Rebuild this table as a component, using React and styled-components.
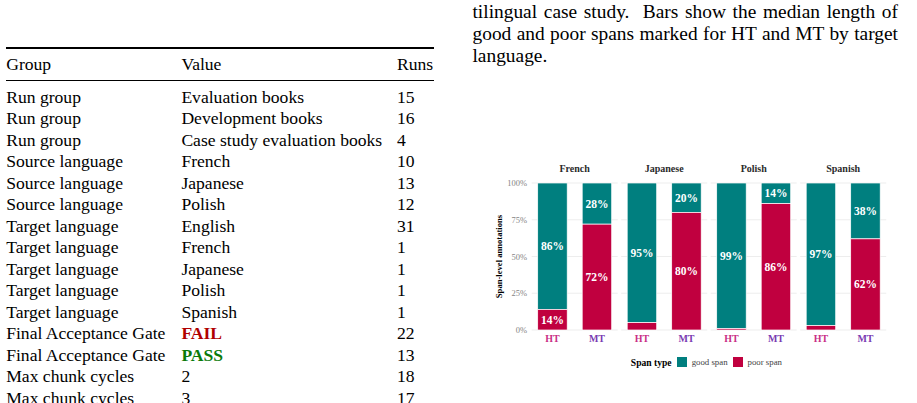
import React from 'react';
import styled, { createGlobalStyle } from 'styled-components';

const SERIF = '"Liberation Serif", "Times New Roman", serif';

const Global = createGlobalStyle`
  html, body { margin: 0; padding: 0; background: #fff; }
  body { font-family: ${SERIF}; color: #000; overflow: hidden; }
`;

const Page = styled.div`
  width: 917px;
  height: 403px;
  overflow: hidden;
  box-sizing: border-box;
  padding-left: 6.2px;
  display: flex;
  align-items: flex-start;
  gap: 38.3px;
`;

const LeftCol = styled.div`
  flex: none;
  width: 428px;
  padding-top: 46.5px;
`;

const Table = styled.table`
  width: 100%;
  table-layout: fixed;
  border-collapse: collapse;
  border-spacing: 0;
  font-family: ${SERIF};
  font-size: 17.6px;
  line-height: 21.5px;
  color: #000;
  border-top: 2px solid #000;
`;

const HeadRow = styled.tr`
  border-bottom: 1px solid #000;
`;

const Th = styled.th`
  font-weight: normal;
  text-align: left;
  padding: 5px 0 5px;
  white-space: nowrap;
  width: ${(p) => p.$w || 'auto'};
`;

const Td = styled.td`
  padding: ${(p) => (p.$first ? '5.5px 0 0' : '0')};
  white-space: nowrap;
  font-weight: ${(p) => (p.$tone ? 700 : 400)};
  color: ${(p) => (p.$tone === 'fail' ? '#b00000' : p.$tone === 'pass' ? '#0a7a0a' : '#000')};
`;

const RightCol = styled.div`
  flex: none;
  width: 425.5px;
`;

const Caption = styled.div`
  margin-top: -20.8px;
  font-size: 19.4px;
  line-height: 22px;
`;

const CapLine = styled.div`
  white-space: nowrap;
  text-align: ${(p) => (p.$last ? 'left' : 'justify')};
  text-align-last: ${(p) => (p.$last ? 'left' : 'justify')};
`;

const ChartSvg = styled.svg`
  display: block;
  margin-top: 87.8px;
  margin-left: 17.5px;
  font-family: ${SERIF};
`;

const StripLabel = styled.text`
  font-size: 10px;
  font-weight: 700;
  fill: #2b2b2b;
`;

const TickLabel = styled.text`
  font-size: 8.5px;
  fill: #858585;
`;

const AxisTitle = styled.text`
  font-size: 8.6px;
  font-weight: 700;
  fill: #000;
`;

const XLabel = styled.text`
  font-size: 10px;
  font-weight: 700;
  fill: ${(p) => (p.$kind === 'HT' ? '#c92f86' : '#7a3bb2')};
`;

const BarLabel = styled.text`
  font-size: 11.5px;
  font-weight: 700;
  fill: #fff;
`;

const Legend = styled.div`
  margin-top: 11.3px;
  margin-left: 59.2px;
  width: 354.5px;
  display: flex;
  justify-content: center;
  align-items: center;
  height: 12px;
  font-family: ${SERIF};
`;

const LegendTitle = styled.span`
  font-size: 9.6px;
  font-weight: 700;
  margin-right: 5px;
`;

const Key = styled.span`
  width: 10px;
  height: 10px;
  background: ${(p) => p.$color};
  margin-right: 5px;
`;

const KeyText = styled.span`
  font-size: 8.8px;
  color: #444;
  margin-right: 5px;
`;

const TEAL = '#007f7f';
const RED = '#c0003f';

const rows = [
  ['Run group', 'Evaluation books', '15'],
  ['Run group', 'Development books', '16'],
  ['Run group', 'Case study evaluation books', '4'],
  ['Source language', 'French', '10'],
  ['Source language', 'Japanese', '13'],
  ['Source language', 'Polish', '12'],
  ['Target language', 'English', '31'],
  ['Target language', 'French', '1'],
  ['Target language', 'Japanese', '1'],
  ['Target language', 'Polish', '1'],
  ['Target language', 'Spanish', '1'],
  ['Final Acceptance Gate', 'FAIL', '22', 'fail'],
  ['Final Acceptance Gate', 'PASS', '13', 'pass'],
  ['Max chunk cycles', '2', '18'],
  ['Max chunk cycles', '3', '17'],
];

const panels = [
  { name: 'French', HT: 14, MT: 72 },
  { name: 'Japanese', HT: 5, MT: 80 },
  { name: 'Polish', HT: 1, MT: 86 },
  { name: 'Spanish', HT: 3, MT: 62 },
];

const Y0 = 330;
const PH = 147;
const yv = (v) => Y0 - (v * PH) / 100;
const PX0 = 531.7;
const PSTEP = 89.5;
const PW = 86;
const BW = 29.5;
const ticks = [0, 25, 50, 75, 100];

function Bar({ x, poor, kind }) {
  const good = 100 - poor;
  const cx = x + BW / 2;
  return (
    <g>
      <rect x={x} y={yv(100)} width={BW} height={yv(poor) - yv(100)} fill={TEAL} stroke="#fff" strokeWidth="0.7" />
      <rect x={x} y={yv(poor)} width={BW} height={yv(0) - yv(poor)} fill={RED} stroke="#fff" strokeWidth="0.7" />
      {good >= 10 && (
        <BarLabel x={cx} y={yv(poor + good / 2)} textAnchor="middle" dominantBaseline="central">
          {good}%
        </BarLabel>
      )}
      {poor >= 10 && (
        <BarLabel x={cx} y={yv(poor / 2)} textAnchor="middle" dominantBaseline="central">
          {poor}%
        </BarLabel>
      )}
      <XLabel $kind={kind} x={cx} y={341.5} textAnchor="middle">
        {kind}
      </XLabel>
    </g>
  );
}

function Chart() {
  return (
    <ChartSvg width="420" height="190" viewBox="490 155 420 190">
      <AxisTitle x={0} y={0} transform="translate(498.5 256.5) rotate(-90)" textAnchor="middle" dominantBaseline="central">
        Span-level annotations
      </AxisTitle>
      {ticks.map((t) => (
        <TickLabel key={t} x={527} y={yv(t)} textAnchor="end" dominantBaseline="central">
          {t}%
        </TickLabel>
      ))}
      {panels.map((p, i) => {
        const x0 = PX0 + PSTEP * i;
        return (
          <g key={p.name}>
            {ticks.map((t) => (
              <line key={t} x1={x0} x2={x0 + PW} y1={yv(t)} y2={yv(t)} stroke="#ebebeb" strokeWidth="0.9" />
            ))}
            <StripLabel x={x0 + PW / 2} y={171.5} textAnchor="middle">
              {p.name}
            </StripLabel>
            <Bar x={x0 + 6} poor={p.HT} kind="HT" />
            <Bar x={x0 + 50.5} poor={p.MT} kind="MT" />
          </g>
        );
      })}
    </ChartSvg>
  );
}

export default function App() {
  return (
    <>
      <Global />
      <Page>
        <LeftCol>
          <Table>
            <thead>
              <HeadRow>
                <Th $w="175.2px">Group</Th>
                <Th $w="215.6px">Value</Th>
                <Th>Runs</Th>
              </HeadRow>
            </thead>
            <tbody>
              {rows.map(([g, v, n, tone], i) => (
                <tr key={i}>
                  <Td $first={i === 0}>{g}</Td>
                  <Td $first={i === 0} $tone={tone}>{v}</Td>
                  <Td $first={i === 0}>{n}</Td>
                </tr>
              ))}
            </tbody>
          </Table>
        </LeftCol>
        <RightCol>
          <Caption>
            <CapLine>Figure 4: Span-level quality annotations in the mul-</CapLine>
            <CapLine>tilingual case study.&nbsp; Bars show the median length of</CapLine>
            <CapLine>good and poor spans marked for HT and MT by target</CapLine>
            <CapLine $last>language.</CapLine>
          </Caption>
          <Chart />
          <Legend>
            <LegendTitle>Span type</LegendTitle>
            <Key $color={TEAL} />
            <KeyText>good span</KeyText>
            <Key $color={RED} />
            <KeyText>poor span</KeyText>
          </Legend>
        </RightCol>
      </Page>
    </>
  );
}
